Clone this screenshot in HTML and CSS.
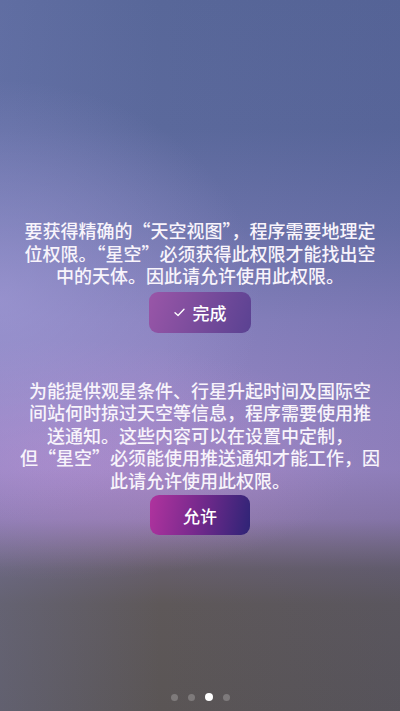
FILE: index.html
```html
<!DOCTYPE html>
<html lang="zh-CN">
<head>
<meta charset="utf-8">
<title>星空</title>
<link rel="stylesheet" href="styles.css">
</head>
<body>
<div class="screen">
  <p class="msg msg-location">要获得精确的“天空视图”，程序需要地理定<br>位权限。“星空”必须获得此权限才能找出空<br>中的天体。因此请允许使用此权限。</p>
  <button class="btn btn-done"><svg class="check" viewBox="0 0 12 10" width="11" height="9"><path d="M1 5.2 L4.4 8.4 L11 1.4" fill="none" stroke="#fff" stroke-width="1.5" stroke-linecap="round" stroke-linejoin="round"/></svg><span>完成</span></button>
  <p class="msg msg-notify">为能提供观星条件、行星升起时间及国际空<br>间站何时掠过天空等信息，程序需要使用推<br>送通知。这些内容可以在设置中定制，<br>但“星空”必须能使用推送通知才能工作，因<br>此请允许使用此权限。</p>
  <button class="btn btn-allow"><span>允许</span></button>
  <div class="dots">
    <span class="dot"></span>
    <span class="dot"></span>
    <span class="dot active"></span>
    <span class="dot"></span>
  </div>
</div>
</body>
</html>
```
FILE: styles.css
```css
html, body {
  margin: 0;
  padding: 0;
}
body {
  width: 400px;
  height: 711px;
  overflow: hidden;
  font-family: "Noto Sans CJK SC", "Noto Sans", sans-serif;
}
.screen {
  width: 400px;
  height: 711px;
  display: flex;
  flex-direction: column;
  align-items: center;
  box-sizing: border-box;
  padding: 219px 10px 10px;
  background:
    radial-gradient(ellipse 260px 220px at 0px 300px, rgba(170, 160, 220, 0.55), rgba(170, 160, 220, 0) 100%),
    radial-gradient(ellipse 300px 120px at 60px 460px, rgba(190, 140, 210, 0.45), rgba(190, 140, 210, 0) 100%),
    linear-gradient(90deg, rgba(120, 130, 190, 0.25) 0%, rgba(0, 0, 0, 0) 40%, rgba(60, 70, 130, 0.12) 100%),
    linear-gradient(180deg,
      #586799 0%,
      #5b699c 18%,
      #6c73aa 32%,
      #8680bc 45%,
      #9585c3 58%,
      #9a86c2 66%,
      #8e7aac 73%,
      #776a84 77%,
      #665e6a 80%,
      #5e5859 85%,
      #5a5555 100%);
}
.msg {
  margin: 0;
  font-size: 18px;
  font-weight: 500;
  line-height: 22.5px;
  color: #f8f4fb;
  text-align: center;
  white-space: nowrap;
}
.btn {
  border: 0;
  border-radius: 9px;
  color: #fff;
  font-family: "Noto Sans CJK SC", "Noto Sans", sans-serif;
  font-size: 17px;
  font-weight: 500;
  display: flex;
  align-items: center;
  justify-content: center;
  gap: 8px;
  padding: 0;
}
.btn-done {
  margin-top: 5px;
  width: 102px;
  height: 41px;
  background: linear-gradient(110deg, #9a56a8 0%, #7a4c9c 50%, #5a4292 100%);
}
.check {
  display: block;
}
.msg-notify {
  margin-top: 46px;
}
.btn-allow {
  margin-top: 4px;
  width: 100px;
  height: 40px;
  background: linear-gradient(100deg, #b0339e 0%, #7a2a8e 45%, #2e2476 100%);
}
.dots {
  margin-top: auto;
  display: flex;
  align-items: center;
  gap: 10px;
  height: 8px;
}
.dot {
  width: 7px;
  height: 7px;
  border-radius: 50%;
  background: rgba(255, 255, 255, 0.22);
}
.dot.active {
  width: 8px;
  height: 8px;
  background: #fff;
}
```
